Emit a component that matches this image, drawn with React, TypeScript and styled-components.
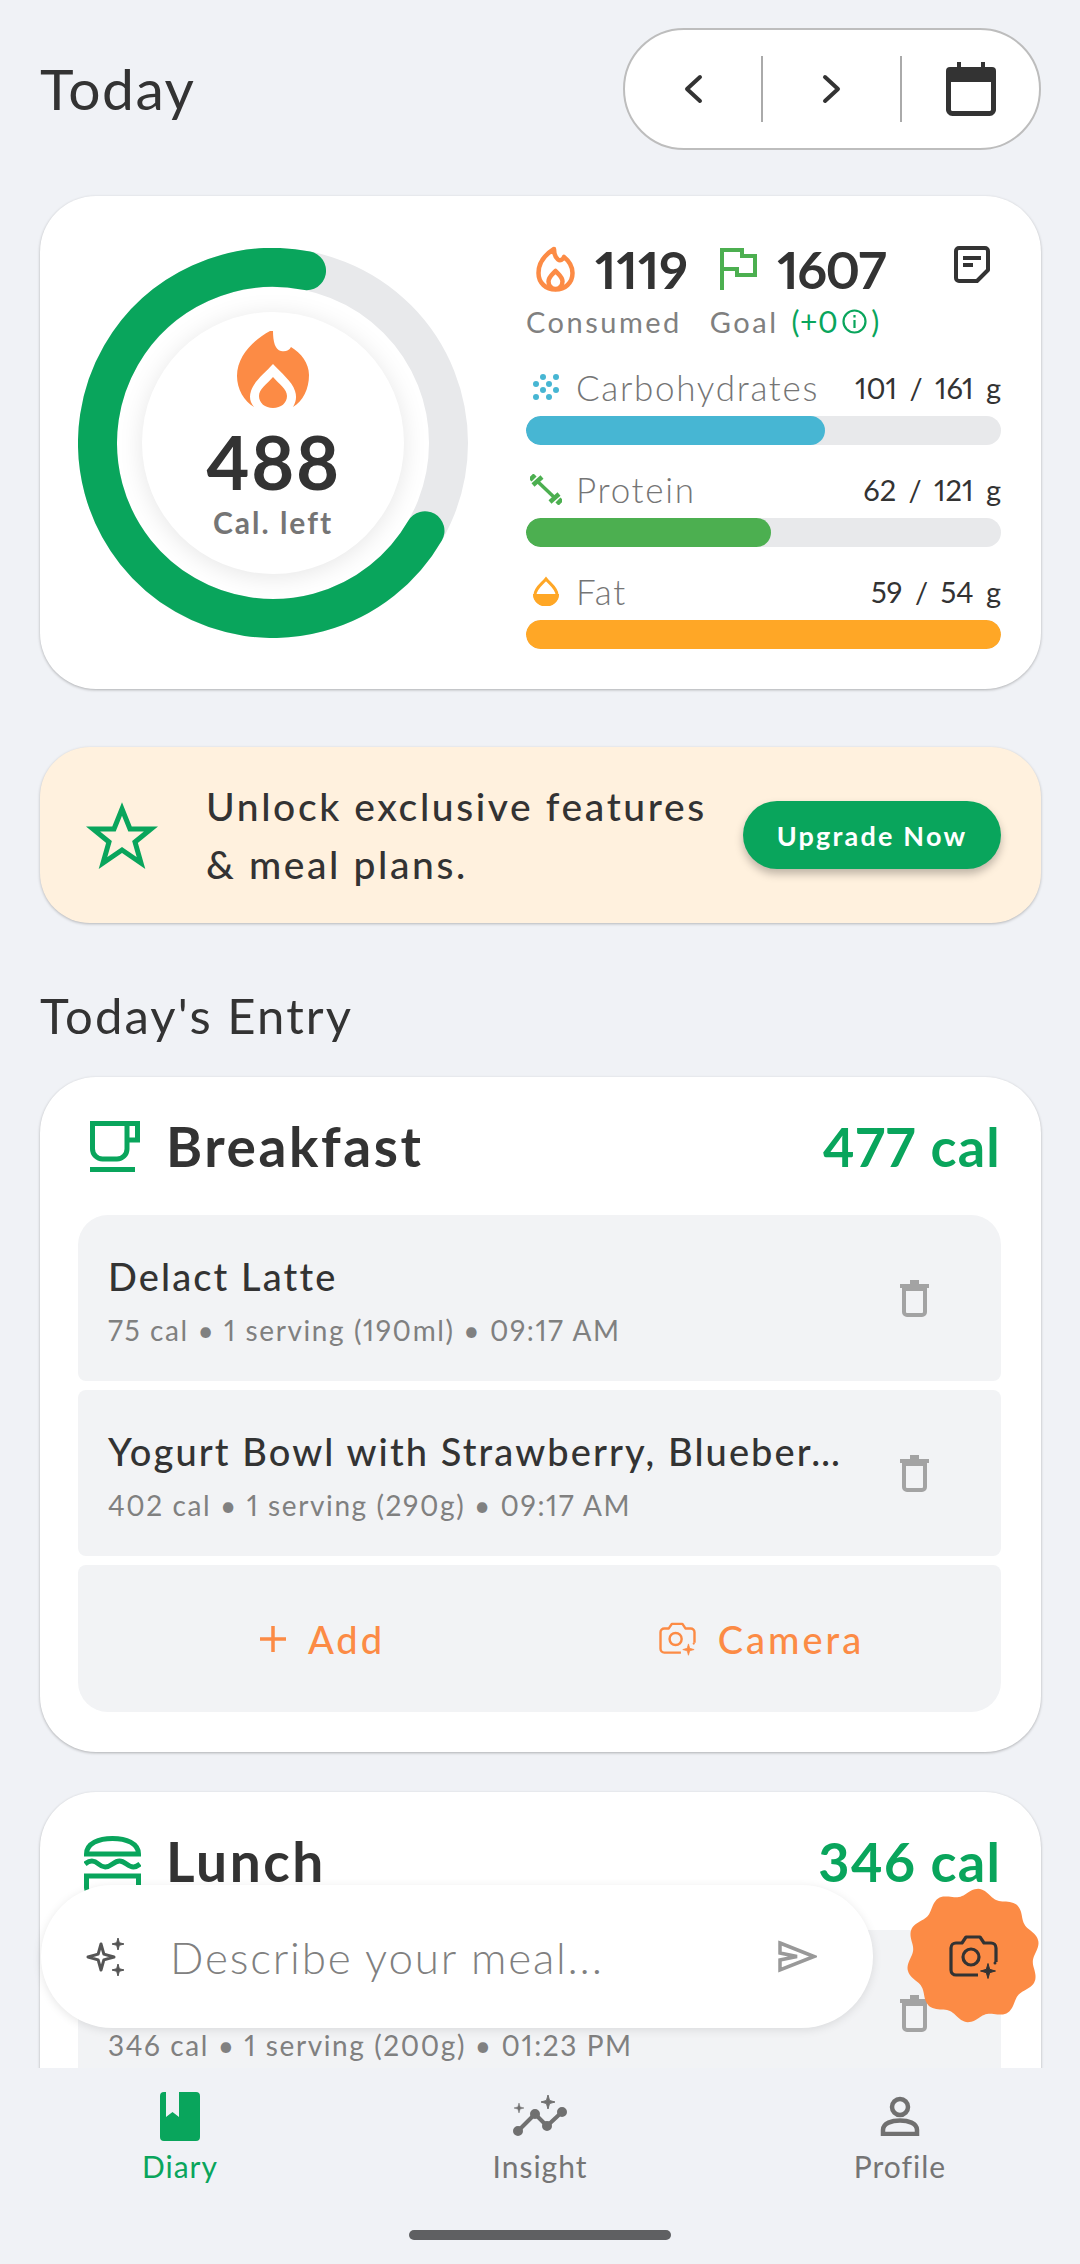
import styled, { createGlobalStyle } from "styled-components";

const GREEN = "#09a55c";
const ORANGE = "#fc8b45";
const INK = "#333333";
const MUTED = "#808080";

const sparkle = (cx: number, cy: number, r: number) => {
  const k = r * 0.22;
  return `M${cx} ${cy - r}L${cx + k} ${cy - k}L${cx + r} ${cy}L${cx + k} ${cy + k}L${cx} ${cy + r}L${cx - k} ${cy + k}L${cx - r} ${cy}L${cx - k} ${cy - k}Z`;
};

const blobPath = (() => {
  const pts: string[] = [];
  for (let i = 0; i < 240; i++) {
    const a = (i / 240) * Math.PI * 2;
    const r = 63.5 + 3.4 * Math.cos(10 * (a + (85 * Math.PI) / 180));
    pts.push(`${(67 + r * Math.cos(a)).toFixed(1)} ${(67.5 + r * Math.sin(a)).toFixed(1)}`);
  }
  return `M${pts.join("L")}Z`;
})();

const macros = [
  { name: "Carbohydrates", value: "101 / 161 g", pct: 63, color: "#47b6d3", icon: <CarbIcon /> },
  { name: "Protein", value: "62 / 121 g", pct: 51.5, color: "#4caf50", icon: <ProteinIcon /> },
  { name: "Fat", value: "59 / 54 g", pct: 100, color: "#ffa726", icon: <FatIcon /> },
];

export default function App() {
  return (
    <Page>
      <GlobalStyle />
      <Scroll>
        <Header>
          <PageTitle>Today</PageTitle>
          <DateNav>
            <NavCell>
              <svg width="20" height="30" viewBox="0 0 20 30" fill="none" stroke={INK} strokeWidth="4" strokeLinecap="round" strokeLinejoin="round">
                <path d="M17 3L4 15L17 27" />
              </svg>
            </NavCell>
            <NavCell $divided>
              <svg width="20" height="30" viewBox="0 0 20 30" fill="none" stroke={INK} strokeWidth="4" strokeLinecap="round" strokeLinejoin="round">
                <path d="M3 3L16 15L3 27" />
              </svg>
            </NavCell>
            <NavCell $divided>
              <svg width="50" height="54" viewBox="0 0 50 54" fill="none">
                <path d="M11 0h4v6h-4zM35 0h4v6h-4z" fill={INK} />
                <path d="M4 5h42a4 4 0 0 1 4 4v11H0V9a4 4 0 0 1 4-4z" fill={INK} />
                <path d="M2.500 18v29a4 4 0 0 0 4 4.500h37a4 4 0 0 0 4-4.500V18" stroke={INK} strokeWidth="5" />
              </svg>
            </NavCell>
          </DateNav>
        </Header>

        <HeroCard>
          <Ring>
            <svg width="390" height="390" viewBox="0 0 390 390" fill="none">
              <circle cx="195" cy="195" r="175.500" stroke="#e8e9eb" strokeWidth="39" />
              <circle
                cx="195"
                cy="195"
                r="175.500"
                stroke={GREEN}
                strokeWidth="39"
                strokeLinecap="round"
                pathLength={360}
                strokeDasharray="251 360"
                transform="rotate(30 195 195)"
              />
            </svg>
            <RingCenter>
              <svg width="72" height="77" viewBox="0 0 72 77" fill={ORANGE}>
                <path d="M33 0C18 8 0 24 0 45C0 58 7 70 17 76C13 71 12 66 14 60C17 50 28 42 36 33C44 42 55 50 58 60C60 66 59 71 56 76C66 70 72 58 72 44C72 32 64 22 54 16C52 20 48 21 44 20C38 19 36 10 36 0Z" />
                <path d="M36 46C30 53 22 58 22 65C22 72 28 77 36 77C44 77 50 72 50 65C50 58 42 53 36 46Z" />
              </svg>
              <LeftValue>488</LeftValue>
              <LeftLabel>Cal. left</LeftLabel>
            </RingCenter>
          </Ring>

          <Summary>
            <StatRow>
              <svg width="39" height="46" viewBox="0 0 39 46" fill="none" stroke={ORANGE} strokeWidth="4.500" strokeLinejoin="round">
                <path d="M18 3C10 8 2.500 15 2.500 27C2.500 37 10 43.500 19.500 43.500C29 43.500 36.500 37 36.500 27C36.500 20 33 15 28 11C27 14 24 15 22 13.500C19.500 11.500 18 8 18 3Z" />
                <path d="M19.500 25C16 29 12.500 31 12.500 35.500C12.500 39.500 15.500 43 19.500 43C23.500 43 26.500 39.500 26.500 35.500C26.500 31 23 29 19.500 25Z" />
              </svg>
              <StatNumber $tracking={0}>1119</StatNumber>
              <FlagSlot>
                <svg width="37" height="42" viewBox="0 0 37 42" fill="none" stroke="#4caf50" strokeWidth="4">
                  <path d="M2 42V2H22V8H35V27H17V21H2" />
                </svg>
              </FlagSlot>
              <StatNumber $tracking={-1.5}>1607</StatNumber>
              <NoteSlot>
                <svg width="36" height="37" viewBox="0 0 36 37" fill="none" stroke={INK} strokeWidth="4" strokeLinejoin="round">
                  <path d="M5 2h26a3 3 0 0 1 3 3v19L23 35H5a3 3 0 0 1-3-3V5a3 3 0 0 1 3-3z" />
                  <path d="M9 12h18M9 19h10" />
                </svg>
              </NoteSlot>
            </StatRow>
            <StatLabels>
              <StatLabel>Consumed</StatLabel>
              <StatLabel>Goal</StatLabel>
              <GoalDelta>
                (+0
                <svg width="25" height="25" viewBox="0 0 25 25" fill="none" stroke={GREEN} strokeWidth="2.200">
                  <circle cx="12.500" cy="12.500" r="11" />
                  <path d="M12.500 11v8M12.500 6v2.500" />
                </svg>
                )
              </GoalDelta>
            </StatLabels>

            <Macros>
              {macros.map((m) => (
                <Macro key={m.name}>
                  <MacroHead>
                    <MacroIcon>{m.icon}</MacroIcon>
                    <MacroName>{m.name}</MacroName>
                    <MacroValue>{m.value}</MacroValue>
                  </MacroHead>
                  <Track>
                    <Fill $color={m.color} style={{ width: `${m.pct}%` }} />
                  </Track>
                </Macro>
              ))}
            </Macros>
          </Summary>
        </HeroCard>

        <Banner>
          <BannerStar>
            <svg width="72" height="69" viewBox="0 0 72 69" fill="none" stroke={GREEN} strokeWidth="5">
              <path d="M36 8L44 28H65L49 41L55 62L36 49L17 62L23 41L7 28H28Z" />
            </svg>
          </BannerStar>
          <BannerText>
            Unlock exclusive features
            <br />& meal plans.
          </BannerText>
          <UpgradeButton>Upgrade Now</UpgradeButton>
        </Banner>

        <SectionTitle>Today's Entry</SectionTitle>

        <MealCard>
          <MealHead>
            <MealIcon $inset={12}>
              <svg width="50" height="51" viewBox="0 0 50 51" fill="none" stroke={GREEN} strokeWidth="5">
                <path d="M2.500 2.500H37V28a10 10 0 0 1-10 10H12.500a10 10 0 0 1-10-10Z" />
                <path d="M37 2.500H47.500V19H37" />
                <path d="M0 48.500H45" />
              </svg>
            </MealIcon>
            <MealName>Breakfast</MealName>
            <MealCalories>477 cal</MealCalories>
          </MealHead>
          <FoodRow $pos="first">
            <FoodText>
              <FoodName>Delact Latte</FoodName>
              <FoodMeta>75 cal • 1 serving (190ml) • 09:17 AM</FoodMeta>
            </FoodText>
            <TrashIcon />
          </FoodRow>
          <FoodRow>
            <FoodText>
              <FoodName>Yogurt Bowl with Strawberry, Blueber…</FoodName>
              <FoodMeta>402 cal • 1 serving (290g) • 09:17 AM</FoodMeta>
            </FoodText>
            <TrashIcon />
          </FoodRow>
          <AddRow>
            <AddAction>
              <svg width="26" height="26" viewBox="0 0 26 26" stroke={ORANGE} strokeWidth="3.500">
                <path d="M13 0V26M0 13H26" />
              </svg>
              Add
            </AddAction>
            <AddAction>
              <CameraIcon color={ORANGE} width={37} height={34} />
              Camera
            </AddAction>
          </AddRow>
        </MealCard>

        <MealCard>
          <MealHead>
            <MealIcon $inset={6}>
              <svg width="57" height="74" viewBox="0 -12 57 74" fill="none" stroke={GREEN} strokeWidth="5">
                <path d="M2.500 18C2.500 7 15 2.500 28.500 2.500S54.500 7 54.500 18Z" />
                <path d="M1 28C6 24 10 24 14.500 28S23 32 28.500 28S37 24 42.500 28S51 32 56 28" />
                <path d="M2.500 40H54.500V52a7 7 0 0 1-7 7H9.500a7 7 0 0 1-7-7Z" />
              </svg>
            </MealIcon>
            <MealName>Lunch</MealName>
            <MealCalories>346 cal</MealCalories>
          </MealHead>
          <FoodRow $pos="first">
            <FoodText>
              <FoodName>&nbsp;</FoodName>
              <FoodMeta>346 cal • 1 serving (200g) • 01:23 PM</FoodMeta>
            </FoodText>
            <TrashIcon />
          </FoodRow>
        </MealCard>
      </Scroll>

      <MealInput>
        <svg width="39" height="38" viewBox="0 0 39 38" fill="none" stroke="#555555" strokeWidth="3" strokeLinejoin="round">
          <path d={sparkle(15, 19, 13)} />
          <path d={sparkle(32, 6, 6)} fill="#555555" strokeWidth="1" />
          <path d={sparkle(32, 32, 6)} fill="#555555" strokeWidth="1" />
        </svg>
        <Placeholder>Describe your meal...</Placeholder>
        <svg width="39" height="33" viewBox="0 0 39 33" fill="none" stroke="#999999" strokeWidth="3.500" strokeLinejoin="miter">
          <path d="M2 3L36 16.500L2 30V20L19 16.500L2 13Z" />
        </svg>
      </MealInput>

      <CameraFab>
        <svg width="134" height="135" viewBox="0 0 134 135">
          <path d={blobPath} fill={ORANGE} />
        </svg>
        <FabIcon>
          <CameraIcon color={INK} width={49} height={44} />
        </FabIcon>
      </CameraFab>

      <BottomNav>
        <NavTabs>
          <NavTab $active>
            <TabIcon>
              <svg width="40" height="49" viewBox="0 0 40 49">
                <path fillRule="evenodd" d="M4 0H36a4 4 0 0 1 4 4V45a4 4 0 0 1-4 4H4a4 4 0 0 1-4-4V4a4 4 0 0 1 4-4ZM6 0V25L12.500 20L19 25V0Z" fill={GREEN} />
              </svg>
            </TabIcon>
            Diary
          </NavTab>
          <NavTab>
            <TabIcon>
              <svg width="55" height="42" viewBox="0 0 55 42" fill="#707070" stroke="#707070" strokeWidth="4" strokeLinejoin="round">
                <path d="M5 36L22 19L34 31L49 17" fill="none" />
                <circle cx="5" cy="36" r="3" />
                <circle cx="22" cy="19" r="3" />
                <circle cx="34" cy="31" r="3" />
                <circle cx="49" cy="17" r="3" />
                <path d={sparkle(35, 7, 7)} strokeWidth="1" />
                <path d={sparkle(6, 13, 5)} strokeWidth="0.500" />
              </svg>
            </TabIcon>
            Insight
          </NavTab>
          <NavTab>
            <TabIcon>
              <svg width="40" height="40" viewBox="0 0 40 40" fill="none" stroke="#707070" strokeWidth="4.500">
                <circle cx="20" cy="11" r="8" />
                <path d="M3 38V34C3 27 12 24.500 20 24.500S37 27 37 34V38Z" />
              </svg>
            </TabIcon>
            Profile
          </NavTab>
        </NavTabs>
        <HomeBar />
      </BottomNav>
    </Page>
  );
}

function CarbIcon() {
  return (
    <svg width="26" height="26" viewBox="0 0 26 26" fill="#47b6d3">
      <circle cx="10" cy="3" r="3" />
      <circle cx="23" cy="3" r="3" />
      <circle cx="3" cy="10" r="3" />
      <circle cx="16" cy="10" r="3" />
      <circle cx="10" cy="16" r="3" />
      <circle cx="23" cy="16" r="3" />
      <circle cx="3" cy="23" r="3" />
      <circle cx="16" cy="23" r="3" />
    </svg>
  );
}

function ProteinIcon() {
  return (
    <svg width="32" height="31" viewBox="0 0 32 31" fill="none" stroke="#4caf50">
      <path d="M6 6L26 25" strokeWidth="3.500" />
      <path d="M3 11L12 3M0 6L5 1M20 28L29 20M27 30L32 25" strokeWidth="4.500" />
    </svg>
  );
}

function FatIcon() {
  return (
    <svg width="26" height="30" viewBox="0 0 26 30">
      <path d="M13 3C9 8 2 12 2 19A11 10 0 0 0 24 19C24 12 17 8 13 3Z" fill="none" stroke="#ffa726" strokeWidth="3" />
      <path d="M0 18H26V19A13 11 0 0 1 0 19Z" fill="#ffa726" />
    </svg>
  );
}

function TrashIcon() {
  return (
    <TrashSlot>
      <svg width="29" height="37" viewBox="0 0 29 37" fill="none" stroke="#a3a3a3" strokeWidth="4">
        <path d="M4 9H25V32a3 3 0 0 1-3 3H7a3 3 0 0 1-3-3Z" />
        <path d="M0 6H29M10 2H19" />
      </svg>
    </TrashSlot>
  );
}

function CameraIcon({ color, width, height }: { color: string; width: number; height: number }) {
  return (
    <svg width={width} height={height} viewBox="0 0 49 44" fill="none" stroke={color} strokeWidth="3.200" strokeLinejoin="round">
      <path d="M29 40H7a5 5 0 0 1-5-5V13a5 5 0 0 1 5-5h6l4-6h14l4 6h7a5 5 0 0 1 5 5v14" />
      <circle cx="22" cy="22" r="8" />
      <path d={sparkle(39, 36, 7.500)} fill={color} strokeWidth="1" />
      <circle cx="46" cy="28" r="1.500" fill={color} stroke="none" />
    </svg>
  );
}

const GlobalStyle = createGlobalStyle`
  html, body {
    margin: 0;
    padding: 0;
    background: #f0f2f6;
  }
  * {
    box-sizing: border-box;
  }
`;

const Page = styled.div`
  position: relative;
  display: flex;
  flex-direction: column;
  width: 1080px;
  height: 2264px;
  overflow: hidden;
  background: #f0f2f6;
  font-family: Lato, "Noto Sans", sans-serif;
  font-variant-numeric: proportional-nums;
  color: ${INK};
`;

const Scroll = styled.main`
  flex: 1;
  min-height: 0;
  overflow: hidden;
  padding: 28px 39px 0 40px;
`;

const Header = styled.header`
  display: flex;
  align-items: center;
  justify-content: space-between;
  height: 122px;
  margin-bottom: 46px;
`;

const PageTitle = styled.h1`
  margin: -2px 0 0;
  font-size: 57px;
  font-weight: 400;
  letter-spacing: 1.5px;
`;

const DateNav = styled.div`
  display: grid;
  grid-template-columns: 136px 139px 1fr;
  width: 418px;
  height: 122px;
  padding: 26px 0;
  background: #fff;
  border: 2px solid #bdbdbd;
  border-radius: 61px;
`;

const NavCell = styled.div<{ $divided?: boolean }>`
  display: flex;
  align-items: center;
  justify-content: center;
  border-left: ${(p) => (p.$divided ? "2px solid #aaaaaa" : "none")};
`;

const HeroCard = styled.section`
  display: flex;
  align-items: center;
  gap: 58px;
  height: 493px;
  padding: 0 40px 0 38px;
  margin-bottom: 58px;
  background: #fff;
  border-radius: 56px;
  box-shadow: 0 1px 3px rgba(0, 0, 0, 0.28);
`;

const Ring = styled.div`
  position: relative;
  flex: none;
  width: 390px;
  height: 390px;
  svg {
    display: block;
  }
`;

const RingCenter = styled.div`
  position: absolute;
  top: 64px;
  left: 64px;
  display: flex;
  flex-direction: column;
  align-items: center;
  width: 262px;
  height: 262px;
  padding-top: 19px;
  background: #fff;
  border-radius: 50%;
  box-shadow: 0 3px 24px rgba(0, 0, 0, 0.1);
`;

const LeftValue = styled.div`
  margin-top: 12px;
  font-size: 74px;
  line-height: 84px;
  font-weight: 700;
  letter-spacing: 1px;
`;

const LeftLabel = styled.div`
  font-size: 30px;
  line-height: 36px;
  font-weight: 700;
  color: #757575;
  letter-spacing: 2px;
`;

const Summary = styled.div`
  flex: 1;
  min-width: 0;
  align-self: flex-start;
  margin-top: 50px;
`;

const StatRow = styled.div`
  display: flex;
  align-items: center;
  height: 46px;
  padding-left: 10px;
`;

const StatNumber = styled.span<{ $tracking: number }>`
  margin-left: 20px;
  font-size: 52px;
  line-height: 46px;
  font-weight: 700;
  letter-spacing: ${(p) => p.$tracking}px;
`;

const FlagSlot = styled.span`
  display: flex;
  margin-left: 32px;
`;

const NoteSlot = styled.span`
  display: flex;
  margin-left: auto;
  margin-right: 11px;
  align-self: flex-start;
`;

const StatLabels = styled.div`
  display: flex;
  align-items: center;
  height: 40px;
  margin-top: 9px;
  gap: 28px;
`;

const StatLabel = styled.span`
  font-size: 29px;
  color: ${MUTED};
  letter-spacing: 2.5px;
`;

const GoalDelta = styled.span`
  display: flex;
  align-items: center;
  gap: 4px;
  margin-left: -15px;
  font-size: 30px;
  color: ${GREEN};
  letter-spacing: 0.5px;
`;

const Macros = styled.div`
  display: flex;
  flex-direction: column;
  gap: 22px;
  margin-top: 24px;
`;

const Macro = styled.div``;

const MacroHead = styled.div`
  display: flex;
  align-items: center;
  height: 44px;
  margin-bottom: 7px;
`;

const MacroIcon = styled.span`
  display: flex;
  justify-content: center;
  width: 40px;
  margin-right: 10px;
`;

const MacroName = styled.span`
  font-size: 35px;
  font-weight: 300;
  color: #757575;
  letter-spacing: 1.7px;
`;

const MacroValue = styled.span`
  margin-left: auto;
  font-size: 29px;
  color: ${INK};
  word-spacing: 5px;
`;

const Track = styled.div`
  height: 29px;
  background: #e8e9eb;
  border-radius: 15px;
  overflow: hidden;
`;

const Fill = styled.div<{ $color: string }>`
  height: 100%;
  background: ${(p) => p.$color};
  border-radius: 15px;
`;

const Banner = styled.section`
  display: flex;
  align-items: center;
  height: 176px;
  padding: 0 40px 0 46px;
  background: #fff1de;
  border-radius: 50px;
  box-shadow: 0 1px 3px rgba(0, 0, 0, 0.25);
`;

const BannerStar = styled.span`
  display: flex;
  margin-right: 48px;
`;

const BannerText = styled.p`
  flex: 1;
  margin: 0;
  font-size: 39px;
  line-height: 58px;
  font-weight: 500;
  letter-spacing: 2.6px;
  white-space: nowrap;
`;

const UpgradeButton = styled.button`
  width: 258px;
  height: 68px;
  padding: 0;
  border: none;
  border-radius: 34px;
  background: ${GREEN};
  color: #fff;
  font-family: inherit;
  font-size: 27px;
  font-weight: 700;
  letter-spacing: 2.2px;
  box-shadow: 0 5px 9px rgba(0, 0, 0, 0.25);
`;

const SectionTitle = styled.h2`
  margin: 62px 0 32px;
  font-size: 49px;
  line-height: 60px;
  font-weight: 400;
  letter-spacing: 2.1px;
`;

const MealCard = styled.section`
  margin-bottom: 40px;
  padding: 0 40px 40px 38px;
  background: #fff;
  border-radius: 56px;
  box-shadow: 0 1px 3px rgba(0, 0, 0, 0.28);
`;

const MealHead = styled.div`
  display: flex;
  align-items: center;
  height: 138px;
`;

const MealIcon = styled.span<{ $inset: number }>`
  display: flex;
  justify-content: flex-start;
  width: 88px;
  padding-left: ${(p) => p.$inset}px;
`;

const MealName = styled.h3`
  margin: 0;
  font-size: 55px;
  font-weight: 700;
  letter-spacing: 2.6px;
`;

const MealCalories = styled.span`
  margin-left: auto;
  font-size: 54px;
  font-weight: 700;
  color: ${GREEN};
  letter-spacing: 1.2px;
`;

const FoodRow = styled.div<{ $pos?: "first" }>`
  display: flex;
  justify-content: space-between;
  height: 166px;
  margin-bottom: 9px;
  padding: 37px 72px 0 30px;
  background: #f2f3f5;
  border-radius: ${(p) => (p.$pos === "first" ? "30px 30px 8px 8px" : "8px")};
`;

const FoodText = styled.div`
  display: flex;
  flex-direction: column;
  min-width: 0;
`;

const FoodName = styled.div`
  font-size: 38px;
  line-height: 48px;
  font-weight: 500;
  letter-spacing: 2.1px;
  white-space: nowrap;
`;

const FoodMeta = styled.div`
  margin-top: 10px;
  font-size: 28px;
  line-height: 40px;
  color: ${MUTED};
  letter-spacing: 1.6px;
  white-space: nowrap;
`;

const TrashSlot = styled.span`
  display: flex;
  flex: none;
  margin-top: 28px;
  height: 37px;
`;

const AddRow = styled.div`
  display: grid;
  grid-template-columns: 1fr 1fr;
  height: 147px;
  padding: 0 20px 0 25px;
  background: #f2f3f5;
  border-radius: 8px 8px 30px 30px;
`;

const AddAction = styled.div`
  display: flex;
  align-items: center;
  justify-content: center;
  gap: 22px;
  font-size: 38px;
  font-weight: 500;
  color: ${ORANGE};
  letter-spacing: 3px;
`;

const MealInput = styled.div`
  position: absolute;
  top: 1885px;
  left: 41px;
  display: flex;
  align-items: center;
  width: 832px;
  height: 143px;
  padding: 0 56px 0 45px;
  background: #fff;
  border-radius: 72px;
  box-shadow: 0 2px 10px rgba(0, 0, 0, 0.1);
`;

const Placeholder = styled.span`
  flex: 1;
  margin-left: 45px;
  font-size: 44px;
  font-weight: 300;
  color: ${MUTED};
  letter-spacing: 1.8px;
`;

const CameraFab = styled.button`
  position: absolute;
  top: 1888px;
  left: 906px;
  width: 134px;
  height: 135px;
  padding: 0;
  border: none;
  background: none;
  svg {
    display: block;
  }
`;

const FabIcon = styled.span`
  position: absolute;
  top: 47px;
  left: 43px;
`;

const BottomNav = styled.nav`
  position: relative;
  flex: none;
  height: 196px;
  padding-top: 23px;
  background: #f0f2f6;
`;

const NavTabs = styled.div`
  display: grid;
  grid-template-columns: repeat(3, 1fr);
`;

const NavTab = styled.div<{ $active?: boolean }>`
  display: flex;
  flex-direction: column;
  align-items: center;
  gap: 5px;
  font-size: 30px;
  line-height: 40px;
  color: ${(p) => (p.$active ? GREEN : "#757575")};
  letter-spacing: 1px;
`;

const TabIcon = styled.span`
  display: flex;
  align-items: center;
  height: 50px;
`;

const HomeBar = styled.div`
  width: 262px;
  height: 10px;
  margin: 44px auto 0;
  background: #5f6062;
  border-radius: 5px;
`;
